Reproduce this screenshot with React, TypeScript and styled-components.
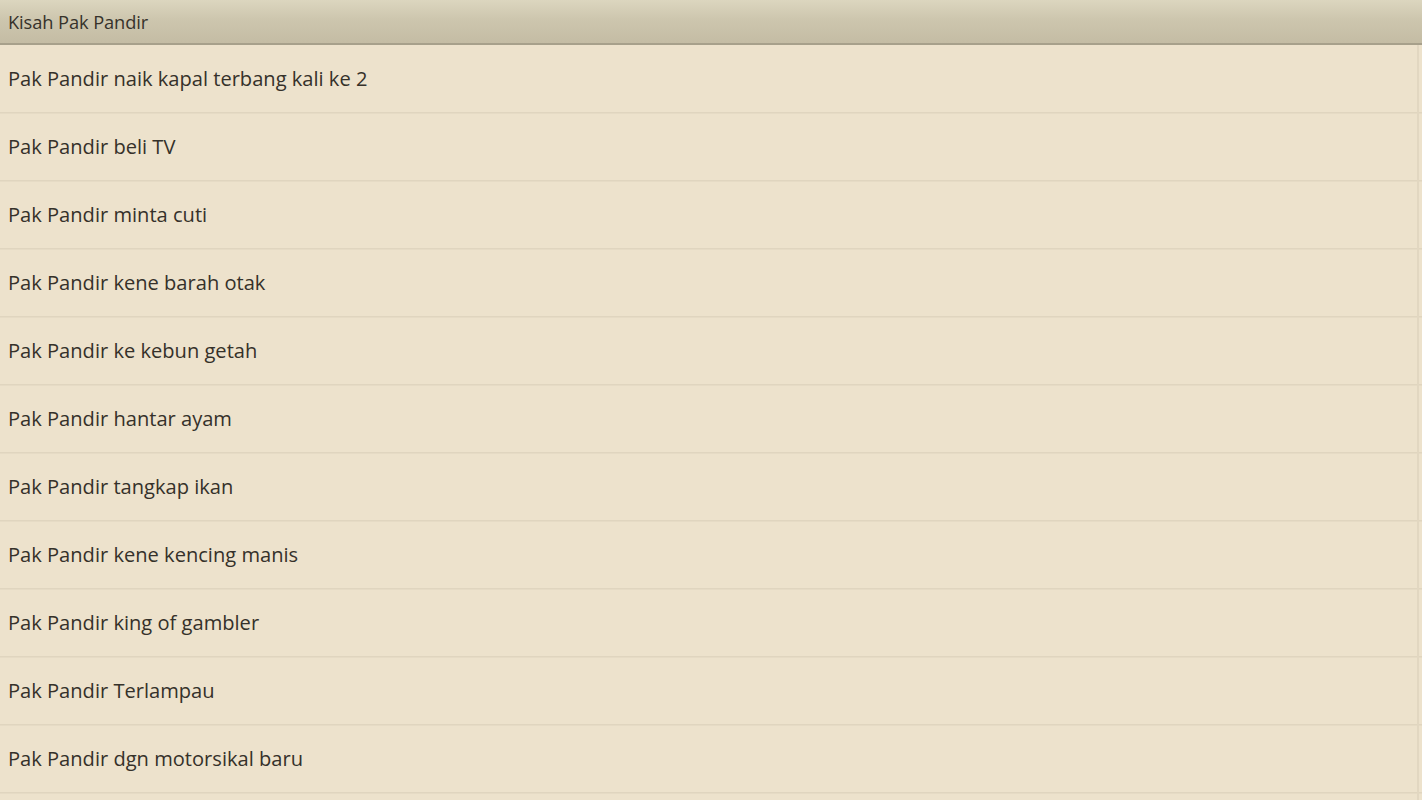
import React from "react";
import styled, { createGlobalStyle } from "styled-components";

const Global = createGlobalStyle`
  html, body { margin: 0; padding: 0; background: #ede2cc; }
  body { font-family: "Open Sans", "Noto Sans", "DejaVu Sans", sans-serif; }
`;

const Screen = styled.div`
  width: 1422px;
  height: 800px;
  overflow: hidden;
  background: #ede2cc;
  display: flex;
  flex-direction: column;
  position: relative;
`;

const TitleBar = styled.div`
  height: 43px;
  flex: none;
  display: flex;
  align-items: center;
  padding-left: 8px;
  background: linear-gradient(to bottom, #dcd6bf 0%, #cdc6ae 45%, #c4bca4 100%);
  border-bottom: 2px solid #a7a08b;
  color: #36322b;
  font-size: 18.3px;
  letter-spacing: -0.1px;
`;

const List = styled.div`
  display: flex;
  flex-direction: column;
`;

const Row = styled.div`
  height: 67px;
  flex: none;
  display: flex;
  align-items: center;
  padding-left: 8px;
  color: #35312a;
  font-size: 20.1px;
  border-bottom: 1px solid #e0d5bf;
  box-shadow: 0 1px 0 #e6dbc5;
`;

const ScrollTrack = styled.div`
  position: absolute;
  top: 45px;
  right: 3px;
  bottom: 0;
  width: 2px;
  background: #e2d7c1;
`;

const items = [
  "Pak Pandir naik kapal terbang kali ke 2",
  "Pak Pandir beli TV",
  "Pak Pandir minta cuti",
  "Pak Pandir kene barah otak",
  "Pak Pandir ke kebun getah",
  "Pak Pandir hantar ayam",
  "Pak Pandir tangkap ikan",
  "Pak Pandir kene kencing manis",
  "Pak Pandir king of gambler",
  "Pak Pandir Terlampau",
  "Pak Pandir dgn motorsikal baru",
];

export default function App() {
  return (
    <>
      <Global />
      <Screen>
        <TitleBar>Kisah Pak Pandir</TitleBar>
        <List>
          {items.map((t) => (
            <Row key={t}>{t}</Row>
          ))}
        </List>
        <ScrollTrack />
      </Screen>
    </>
  );
}
